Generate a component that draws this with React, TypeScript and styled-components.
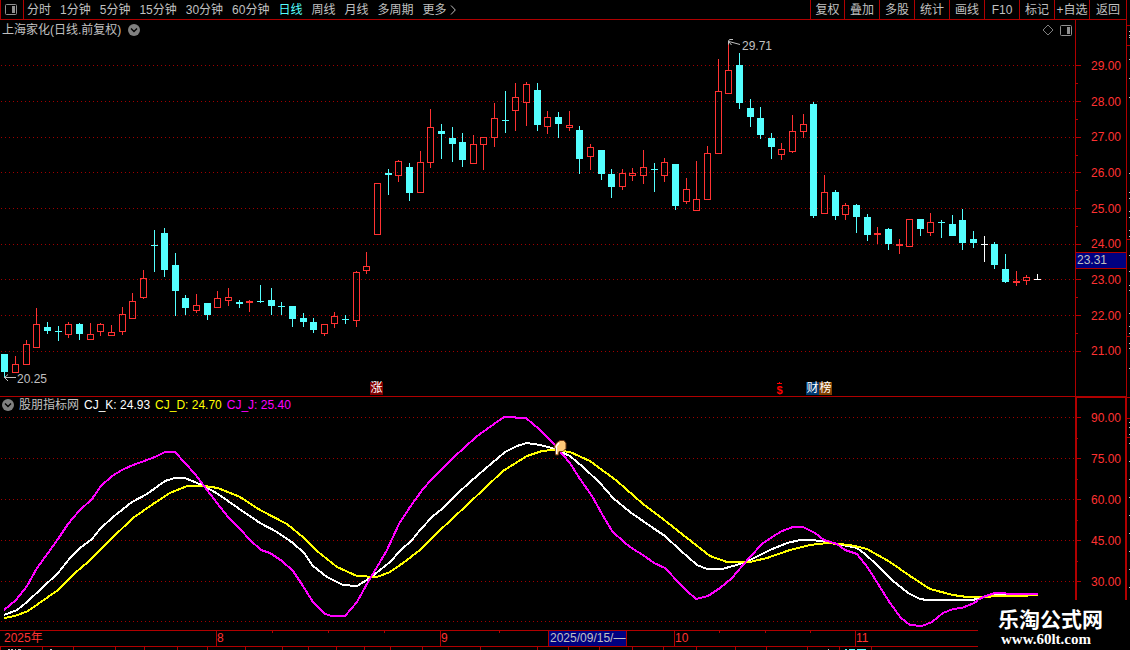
import React from "react";
import styled, { createGlobalStyle } from "styled-components";

const RED = "#ff3232";
const LINE = "#b00000";
const CYAN = "#54ffff";
const GREY = "#c0c0c0";
const NAVY = "#000080";
const SANS = `"Liberation Sans", "Noto Sans CJK SC", sans-serif`;

/* ---------- data ---------- */

type Kind = "up" | "down" | "flat";
// high, body top, body bottom, low, kind
type Candle = [number, number, number, number, Kind];

const CANDLES: Candle[] = [
  [354, 354, 372, 377, "down"],
  [356, 364, 373, 373, "up"],
  [340, 344, 365, 365, "up"],
  [308, 324, 348, 348, "up"],
  [322, 327, 331, 334, "down"],
  [326, 331, 332, 341, "down"],
  [322, 324, 335, 338, "up"],
  [323, 324, 334, 340, "down"],
  [323, 334, 340, 340, "up"],
  [323, 324, 332, 336, "up"],
  [325, 332, 336, 336, "up"],
  [307, 314, 332, 335, "up"],
  [293, 301, 319, 319, "up"],
  [270, 278, 298, 299, "up"],
  [230, 245, 246, 272, "down"],
  [228, 233, 270, 277, "down"],
  [253, 265, 291, 316, "down"],
  [295, 298, 308, 315, "down"],
  [294, 305, 311, 313, "up"],
  [303, 303, 315, 320, "down"],
  [291, 298, 308, 308, "up"],
  [288, 297, 301, 306, "up"],
  [300, 302, 304, 308, "down"],
  [300, 301, 303, 312, "up"],
  [285, 301, 302, 303, "down"],
  [288, 300, 306, 315, "down"],
  [302, 306, 307, 315, "down"],
  [306, 306, 319, 327, "down"],
  [313, 318, 322, 327, "down"],
  [318, 322, 330, 333, "down"],
  [324, 324, 334, 336, "up"],
  [312, 316, 324, 328, "up"],
  [315, 319, 320, 324, "down"],
  [271, 272, 321, 327, "up"],
  [252, 266, 271, 274, "up"],
  [183, 183, 235, 235, "up"],
  [169, 173, 175, 195, "down"],
  [160, 161, 176, 182, "up"],
  [163, 167, 193, 201, "down"],
  [151, 162, 193, 193, "up"],
  [109, 127, 163, 168, "up"],
  [124, 131, 134, 159, "down"],
  [127, 138, 144, 162, "down"],
  [133, 142, 160, 167, "down"],
  [135, 144, 164, 164, "up"],
  [137, 137, 145, 170, "up"],
  [103, 118, 138, 147, "up"],
  [91, 120, 121, 133, "down"],
  [83, 97, 111, 131, "up"],
  [82, 84, 103, 126, "up"],
  [83, 90, 125, 131, "down"],
  [111, 117, 127, 134, "up"],
  [112, 117, 124, 138, "down"],
  [111, 125, 128, 131, "up"],
  [126, 130, 159, 174, "down"],
  [144, 147, 157, 170, "up"],
  [150, 150, 174, 180, "down"],
  [169, 174, 187, 198, "down"],
  [169, 173, 187, 190, "up"],
  [168, 173, 176, 181, "up"],
  [150, 167, 176, 184, "up"],
  [163, 169, 170, 192, "down"],
  [158, 162, 176, 182, "up"],
  [164, 164, 206, 210, "down"],
  [178, 189, 202, 204, "up"],
  [161, 199, 211, 211, "up"],
  [146, 153, 200, 200, "up"],
  [59, 91, 154, 154, "up"],
  [43, 70, 94, 94, "up"],
  [53, 65, 103, 109, "down"],
  [99, 108, 117, 127, "down"],
  [107, 118, 135, 139, "down"],
  [133, 138, 147, 159, "down"],
  [143, 149, 155, 160, "up"],
  [115, 131, 152, 153, "up"],
  [114, 124, 132, 138, "up"],
  [102, 104, 216, 218, "down"],
  [175, 192, 214, 214, "up"],
  [190, 192, 216, 220, "down"],
  [203, 205, 215, 220, "up"],
  [204, 205, 217, 233, "down"],
  [214, 217, 235, 241, "down"],
  [227, 233, 235, 244, "up"],
  [228, 229, 244, 250, "down"],
  [239, 244, 246, 254, "up"],
  [219, 219, 247, 247, "up"],
  [219, 219, 229, 236, "down"],
  [213, 222, 233, 236, "up"],
  [220, 222, 223, 238, "down"],
  [215, 224, 236, 236, "down"],
  [209, 220, 243, 250, "down"],
  [231, 239, 243, 248, "down"],
  [236, 244, 245, 262, "flat"],
  [242, 244, 265, 269, "down"],
  [254, 269, 282, 283, "down"],
  [271, 281, 283, 286, "up"],
  [275, 277, 281, 285, "up"],
  [274, 279, 280, 280, "flat"],
];

const LINE_J =
  "4,610 16,600 27,586 37,568 48,553 58,539 68,524 79,511 92,499 101,486 112,476 122,470 133,465 147,460 155,457 165,452 175,452 185,463 195,474 204,486 217,503 228,517 240,529 250,540 261,550 270,553 282,561 293,571 303,586 313,602 325,614 332,616 345,616 357,602 368,582 380,562 387,550 399,524 410,507 423,489 431,480 442,469 453,458 465,447 476,437 487,429 504,417 515,417 516,418 526,418 539,429 553,443 563,455 570,463 580,479 592,496 602,514 612,531 625,543 633,549 643,555 654,563 665,568 680,584 687,591 696,599 708,596 720,588 732,578 743,565 750,557 762,544 772,537 782,531 793,527 803,527 815,533 824,540 837,544 845,550 857,554 868,568 880,587 890,603 901,618 910,625 922,626 932,622 943,613 953,609 962,608 974,603 983,597 995,593 1005,593 1007,594 1038,594";
const LINE_K =
  "4,615 17,610 27,602 42,588 58,573 70,558 80,548 92,539 100,529 113,517 132,502 147,494 165,481 175,478 185,478 204,486 218,494 238,508 260,523 277,532 293,543 304,553 313,566 327,577 343,585 357,586 370,578 380,570 390,562 400,551 412,540 420,530 433,516 442,509 457,494 470,482 485,469 505,452 517,446 527,443 540,445 552,448 570,456 583,467 600,483 613,498 630,512 653,528 665,536 680,550 697,565 707,569 722,569 737,565 750,560 770,550 787,543 800,540 813,540 833,543 857,548 865,554 877,565 892,580 908,593 920,599 927,600 973,600 990,595 1038,594";
const LINE_D =
  "4,618 15,616 28,611 58,590 75,573 88,562 110,540 133,518 153,504 170,493 187,486 204,486 218,488 240,497 260,510 287,524 304,538 317,551 337,567 357,576 377,577 390,572 403,563 420,550 437,533 467,505 503,471 527,456 542,451 553,450 570,452 590,461 617,481 643,504 663,519 687,538 710,556 727,562 750,562 767,558 790,550 810,545 827,543 850,545 867,549 890,562 910,576 930,589 953,595 967,597 983,597 1000,596 1027,596 1028,595 1038,595";

const PRICE_GRID = [65, 101, 137, 172, 208, 244, 279, 315, 351];
const PRICE_MINOR = [83, 119, 155, 190, 226, 297, 333];
const PRICES = ["29.00", "28.00", "27.00", "26.00", "25.00", "24.00", "23.00", "22.00", "21.00"];
const LEVEL_GRID = [417, 458, 499, 540, 581, 621];
const LEVEL_MINOR = [438, 479, 520, 561];
const LEVELS = ["90.00", "75.00", "60.00", "45.00", "30.00"];

const PERIODS = ["分时", "1分钟", "5分钟", "15分钟", "30分钟", "60分钟", "日线", "周线", "月线", "多周期"];
const TOOLS = ["复权", "叠加", "多股", "统计", "画线", "F10", "标记", "+自选", "返回"];

const MONTHS = [
  { label: "2025年", span: 216 },
  { label: "8", span: 224 },
  { label: "9", span: 234 },
  { label: "10", span: 181 },
  { label: "11", span: 271 },
];
const WEEK_TICKS = [272, 328, 384, 499, 719, 765, 810];
const FOOT_CELLS = [42, 31, 42, 29, 33, 30, 38, 37, 26, 28, 28, 26, 32, 58, 57, 31, 31, 33, 31, 33, 39, 31, 41, 32, 32, 255];

const EDGE_MARKS = [
  31, 35, 37, 59, 78, 97, 173, 192, 198, 211, 217, 230, 236, 255, 271, 285, 290, 313, 326, 333, 343, 348, 368, 422, 427,
  434, 443, 461, 479, 497, 515, 533, 551, 569, 587,
];
const EDGE_RULES = [25, 45, 239, 336, 397, 418, 437];

/* ---------- styles ---------- */

const GlobalStyle = createGlobalStyle`
  * { box-sizing: border-box; }
  body { margin: 0; background: #000; }
  button { font: inherit; color: inherit; background: none; border: 0; margin: 0; padding: 0; cursor: pointer; }
`;

const Screen = styled.div`
  position: relative;
  display: flex;
  width: 100%;
  height: 100vh;
  min-height: 400px;
  overflow: hidden;
  background: #000;
  color: ${GREY};
  font: 12px/14px ${SANS};
  white-space: nowrap;
`;

const Workspace = styled.main`
  flex: 1;
  min-width: 0;
  display: grid;
  grid-template-rows: 20px minmax(0, 377fr) minmax(0, 233fr) 17px 3px;
  border-right: 1px solid ${LINE};
`;

const Edge = styled.svg`
  flex: none;
  width: 3px;
  height: 100%;
`;

const Toolbar = styled.nav`
  display: flex;
  justify-content: space-between;
  border-left: 1px solid ${LINE};
  border-bottom: 1px solid ${LINE};
  overflow: hidden;
`;

const Periods = styled.div`
  display: flex;
  gap: 9px;
`;

const LayoutToggle = styled.button`
  display: flex;
  align-items: center;
  width: 23px;
  padding-left: 4px;
  margin-right: -6px;
  border-right: 1px solid ${LINE};
`;

const Period = styled.button<{ $active?: boolean }>`
  display: flex;
  align-items: center;
  gap: 3px;
  color: ${(p) => (p.$active ? CYAN : GREY)};
`;

const Tools = styled.div`
  display: flex;
`;

const Tool = styled.button`
  width: 35px;
  border-left: 1px solid ${LINE};
  text-align: center;

  &:first-child {
    width: 34px;
  }
  &:last-child {
    width: 37px;
  }
`;

const Panel = styled.section<{ $ruled?: boolean }>`
  display: flex;
  min-height: 0;
  border-bottom: ${(p) => (p.$ruled ? `1px solid ${LINE}` : "0")};
`;

const Plot = styled.div`
  position: relative;
  flex: 1;
  min-width: 0;
  display: grid;
  grid-template: minmax(0, 1fr) / minmax(0, 1fr);

  > * {
    grid-area: 1 / 1;
  }
`;

const Canvas = styled.svg`
  display: block;
  width: 100%;
  height: 100%;
`;

const PanelHead = styled.header<{ $gap: number; $height: number }>`
  z-index: 1;
  align-self: start;
  display: flex;
  align-items: center;
  gap: ${(p) => p.$gap}px;
  height: ${(p) => p.$height}px;
  padding: 0 3px 0 2px;
`;

const Title = styled.h1`
  margin: 0;
  font: inherit;
`;

const HeadActions = styled.div`
  display: flex;
  align-items: center;
  gap: 6px;
  margin-left: auto;
`;

const IconButton = styled.button`
  display: flex;
`;

const Reading = styled.span<{ $color: string }>`
  color: ${(p) => p.$color};
`;

const Axis = styled.aside<{ $selected?: boolean }>`
  position: relative;
  flex: none;
  display: flex;
  width: 51px;
  border: 0 solid ${LINE};
  border-width: ${(p) => (p.$selected ? "1px 1px 0 2px" : "0 0 0 1px")};
`;

const TickMarks = styled.svg`
  flex: none;
  width: 5px;
  height: 100%;
`;

const Scale = styled.ol<{ $top: number; $bottom: number; $right: number }>`
  flex: 1;
  display: flex;
  flex-direction: column;
  margin: 0;
  padding: ${(p) => `${p.$top}px ${p.$right}px ${p.$bottom}px 0`};
  list-style: none;
  color: ${RED};
  text-align: right;
`;

const ScaleMark = styled.li`
  flex: 1;
  display: flex;
  align-items: center;
  justify-content: flex-end;
`;

const CursorPrice = styled.output`
  position: absolute;
  top: calc(100% * 232 / 376);
  left: 0;
  right: 0;
  height: 17px;
  padding-left: 1px;
  border: solid ${LINE};
  border-width: 1px 0;
  background: ${NAVY};
  line-height: 15px;
`;

const Note = styled.span<{ $x: number; $y: number }>`
  position: absolute;
  left: calc(100% * ${(p) => p.$x} / 1075);
  top: calc(100% * ${(p) => p.$y} / 376);
`;

const Flags = styled.div<{ $x: number }>`
  position: absolute;
  bottom: 1px;
  left: calc(100% * ${(p) => p.$x} / 1075);
  display: flex;
`;

const Flag = styled.button<{ $bg: string }>`
  width: 13px;
  height: 13px;
  background: ${(p) => p.$bg};
  color: #fff;
  line-height: 13px;
`;

const Dividend = styled.button`
  display: flex;
  flex-direction: column;
  align-items: center;
  width: 7px;
  color: #ff0000;
  font-weight: bold;
  font-size: 11px;
  line-height: 10px;
`;

const Dates = styled.div`
  position: relative;
  display: flex;
  border: solid ${LINE};
  border-width: 1px 0;
  color: ${RED};
`;

const Month = styled.span<{ $span: number }>`
  flex: 0 0 calc(100% * ${(p) => p.$span} / 1126);
  line-height: 15px;
  border-left: 1px solid ${LINE};

  &:first-child {
    padding-left: 4px;
    border-left: 0;
  }
`;

const WeekTicks = styled.svg`
  position: absolute;
  top: 0;
  left: 0;
  width: 100%;
  height: 2px;
`;

const CursorDate = styled.time`
  position: absolute;
  top: 0;
  bottom: 0;
  left: calc(100% * 548 / 1126);
  padding: 0 1px;
  border: solid ${LINE};
  border-width: 0 1px;
  background: ${NAVY};
  color: ${GREY};
  line-height: 15px;
`;

const Foot = styled.footer`
  position: relative;
  display: flex;
`;

const FootCell = styled.span<{ $span: number }>`
  flex: 0 0 calc(100% * ${(p) => p.$span} / 1126);
  border-left: 1px solid ${LINE};
`;

const FootMarks = styled.svg`
  position: absolute;
  top: 0;
  left: 0;
  width: 100%;
  height: 3px;
`;

const SiteMark = styled.div`
  position: absolute;
  right: 0;
  bottom: 0;
  z-index: 2;
  width: 152px;
  height: 50px;
  padding: 5px 0 0 20px;
  background: #000;
  color: #fff;
`;

const SiteName = styled.strong`
  display: block;
  font: bold 21px/26px "Noto Sans CJK SC", sans-serif;
`;

const SiteLink = styled.a`
  display: block;
  padding-left: 3px;
  color: #fff;
  font: bold 15px/17px "Liberation Serif", serif;
  text-decoration: none;
`;

/* ---------- drawings ---------- */

const PanelIcon = () => (
  <svg width="12" height="11" viewBox="0 0 12 11">
    <rect x="0.5" y="0.5" width="11" height="10" rx="1" fill="none" stroke="#909090" />
    <rect x="7" y="2" width="3" height="7" fill="#909090" />
  </svg>
);

const RoundChevron = () => (
  <svg width="12" height="12" viewBox="0 0 12 12">
    <circle cx="6" cy="6" r="6" fill="#808080" />
    <path d="M3 4.5 6 7.5 9 4.5" fill="none" stroke="#000" strokeWidth="1.4" />
  </svg>
);

const Diamond = () => (
  <svg width="12" height="12" viewBox="0 0 12 12">
    <path d="M6 1 11 6 6 11 1 6Z" fill="none" stroke="#808080" />
  </svg>
);

const MoreArrow = () => (
  <svg width="6" height="10" viewBox="0 0 6 10">
    <path d="M1 .5 5.300 5 1 9.500" fill="none" stroke={GREY} />
  </svg>
);

const ArrowTip = () => (
  <svg width="5" height="3" viewBox="0 0 5 3" shapeRendering="crispEdges">
    <path d="M2 0H3V1H5V2H0V1H2Z" fill="#ff0000" />
  </svg>
);

const Grid = ({ rows }: { rows: number[] }) => (
  <g stroke="#a00000" strokeDasharray="1 3" shapeRendering="crispEdges">
    {rows.map((y) => (
      <line key={y} x1="1" x2="1075" y1={y + 0.5} y2={y + 0.5} />
    ))}
  </g>
);

const INK: Record<Kind, string> = { up: RED, down: CYAN, flat: "#ffffff" };

const CandleShape = ({ candle, index }: { candle: Candle; index: number }) => {
  const [high, top, bottom, low, kind] = candle;
  const x = Math.ceil(4 + index * 10.643);
  const ink = INK[kind];
  const hollow = kind === "up" && bottom - top > 2;
  return (
    <g fill={ink}>
      {top > high && <rect x={x} y={high} width="1" height={top - high} />}
      {low > bottom && <rect x={x} y={bottom} width="1" height={low - bottom} />}
      {hollow ? (
        <rect x={x - 2.5} y={top + 0.5} width="6" height={bottom - top - 1} fill="none" stroke={ink} />
      ) : (
        <rect x={x - 3} y={top} width="7" height={bottom - top} />
      )}
    </g>
  );
};

const Hand = () => (
  <g>
    <path
      d="M553.5 447.500 557 442.500 560 440.500H564L566 443V448.500L563 451.500H559L558.500 455H555.500V448Z"
      fill="#ffc878"
      stroke="#6b3410"
    />
    <path d="M556.500 454V446L559 443" fill="none" stroke="#fff" strokeWidth="1.300" />
  </g>
);

/* ---------- page ---------- */

export default function App() {
  return (
    <Screen>
      <GlobalStyle />
      <Workspace>
        <Toolbar>
          <Periods>
            <LayoutToggle aria-label="布局">
              <PanelIcon />
            </LayoutToggle>
            {PERIODS.map((name) => (
              <Period key={name} $active={name === "日线"} aria-pressed={name === "日线"}>
                {name}
              </Period>
            ))}
            <Period>
              更多
              <MoreArrow />
            </Period>
          </Periods>
          <Tools>
            {TOOLS.map((name) => (
              <Tool key={name}>{name}</Tool>
            ))}
          </Tools>
        </Toolbar>

        <Panel $ruled>
          <Plot>
            <Canvas viewBox="0 20 1075 376" preserveAspectRatio="none">
              <Grid rows={PRICE_GRID} />
              <g shapeRendering="crispEdges">
                {CANDLES.map((c, i) => (
                  <CandleShape key={i} candle={c} index={i} />
                ))}
              </g>
              <g fill="none" stroke={GREY}>
                <path d="M4 377.500H16M8 374.500 4.500 377.500 8 381" />
                <path d="M729 41.500 740 44.500M733 39.500H729.500L728.500 41V44.500M729 42 731.500 45" />
              </g>
            </Canvas>
            <PanelHead $gap={7} $height={20}>
              <Title>上海家化(日线.前复权)</Title>
              <IconButton aria-label="复权方式">
                <RoundChevron />
              </IconButton>
              <HeadActions>
                <IconButton aria-label="标记">
                  <Diamond />
                </IconButton>
                <IconButton aria-label="侧栏">
                  <PanelIcon />
                </IconButton>
              </HeadActions>
            </PanelHead>
            <Note $x={17} $y={352}>
              20.25
            </Note>
            <Note $x={742} $y={19}>
              29.71
            </Note>
            <Flags $x={370}>
              <Flag $bg="#800000">涨</Flag>
            </Flags>
            <Flags $x={776}>
              <Dividend>
                <ArrowTip />$
              </Dividend>
            </Flags>
            <Flags $x={806}>
              <Flag $bg="#003870">财</Flag>
              <Flag $bg="#804000">榜</Flag>
            </Flags>
          </Plot>
          <Axis>
            <TickMarks viewBox="0 20 5 376" preserveAspectRatio="none" shapeRendering="crispEdges">
              {PRICE_GRID.map((y) => (
                <rect key={y} y={y} width="5" height="1" fill={LINE} />
              ))}
              {PRICE_MINOR.map((y) => (
                <rect key={y} y={y} width="2" height="1" fill={LINE} />
              ))}
            </TickMarks>
            <Scale $top={28} $bottom={27} $right={5}>
              {PRICES.map((p) => (
                <ScaleMark key={p}>{p}</ScaleMark>
              ))}
            </Scale>
            <CursorPrice>23.31</CursorPrice>
          </Axis>
        </Panel>

        <Panel>
          <Plot>
            <Canvas viewBox="0 397 1075 233" preserveAspectRatio="none">
              <Grid rows={LEVEL_GRID} />
              <g fill="none" strokeWidth="2" shapeRendering="crispEdges">
                <polyline points={LINE_K} stroke="#ffffff" />
                <polyline points={LINE_D} stroke="#ffff00" />
                <polyline points={LINE_J} stroke="#ff00ff" />
              </g>
              <Hand />
            </Canvas>
            <PanelHead $gap={5} $height={16}>
              <IconButton aria-label="指标菜单">
                <RoundChevron />
              </IconButton>
              <span>股朋指标网</span>
              <Reading $color="#ffffff">CJ_K: 24.93</Reading>
              <Reading $color="#ffff00">CJ_D: 24.70</Reading>
              <Reading $color="#ff00ff">CJ_J: 25.40</Reading>
            </PanelHead>
          </Plot>
          <Axis $selected>
            <TickMarks viewBox="0 398 5 232" preserveAspectRatio="none" shapeRendering="crispEdges">
              {LEVEL_GRID.map((y) => (
                <rect key={y} y={y} width="4" height="1" fill={LINE} />
              ))}
              {LEVEL_MINOR.map((y) => (
                <rect key={y} y={y} width="1" height="1" fill={LINE} />
              ))}
            </TickMarks>
            <Scale $top={0} $bottom={28} $right={4}>
              {LEVELS.map((p) => (
                <ScaleMark key={p}>{p}</ScaleMark>
              ))}
            </Scale>
          </Axis>
        </Panel>

        <Dates>
          {MONTHS.map((m) => (
            <Month key={m.label} $span={m.span}>
              {m.label}
            </Month>
          ))}
          <WeekTicks viewBox="0 0 1126 2" preserveAspectRatio="none" shapeRendering="crispEdges">
            {WEEK_TICKS.map((x) => (
              <rect key={x} x={x} width="1" height="2" fill={LINE} />
            ))}
          </WeekTicks>
          <CursorDate dateTime="2025-09-15">2025/09/15/—</CursorDate>
        </Dates>

        <Foot>
          {FOOT_CELLS.map((w, i) => (
            <FootCell key={i} $span={w} />
          ))}
          <FootMarks viewBox="0 0 1126 3" preserveAspectRatio="none" shapeRendering="crispEdges">
            <path d="M8 2.500H10M11 2.500H13M15 2.500H16M18 2.500H21M50 2.500H52M828 2.500H829" stroke={GREY} />
            <path d="M845 2.500H847M849 2.500H855M857 2.500H866" stroke={CYAN} />
          </FootMarks>
        </Foot>
      </Workspace>

      <Edge viewBox="0 0 3 650" preserveAspectRatio="none" shapeRendering="crispEdges">
        {EDGE_MARKS.map((y) => (
          <rect key={y} x="2" y={y} width="1" height="1" fill={GREY} />
        ))}
        {EDGE_RULES.map((y) => (
          <rect key={y} y={y} width="3" height="1" fill={LINE} />
        ))}
      </Edge>

      <SiteMark>
        <SiteName>乐淘公式网</SiteName>
        <SiteLink href="#">www.60lt.com</SiteLink>
      </SiteMark>
    </Screen>
  );
}
